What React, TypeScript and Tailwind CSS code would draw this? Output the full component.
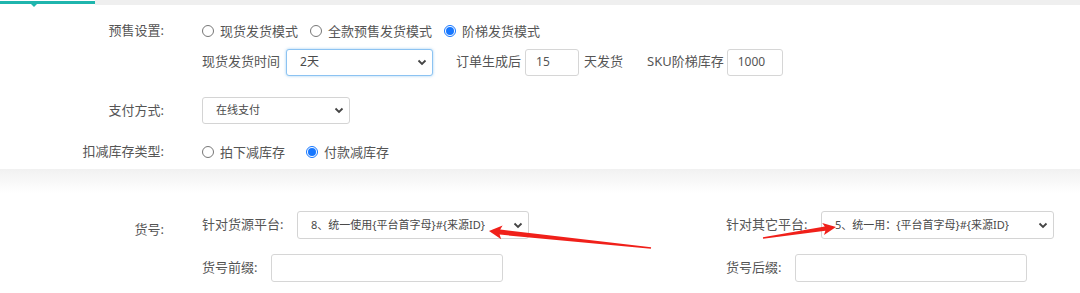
import React from "react";

const font = { fontFamily: '"Noto Sans", "Noto Sans CJK SC", sans-serif' };

function Radio({ checked, label }: { checked?: boolean; label: string }) {
  return (
    <label className="flex items-center gap-[6px] text-[13px] leading-5 text-[#555]">
      {checked ? (
        <span className="w-[12px] h-[12px] rounded-full border border-[#1677ff] flex items-center justify-center">
          <span className="w-[8px] h-[8px] rounded-full bg-[#1677ff]" />
        </span>
      ) : (
        <span className="w-[12px] h-[12px] rounded-full border border-[#777]" />
      )}
      <span>{label}</span>
    </label>
  );
}

function Chevron() {
  return (
    <svg width="10" height="7" viewBox="0 0 10 7" className="shrink-0">
      <polyline points="1.5,1.5 5,5 8.5,1.5" fill="none" stroke="#444" strokeWidth="1.8" />
    </svg>
  );
}

function Select({
  value,
  w,
  h = "h-[27px]",
  size = "text-[11px]",
  focus,
}: {
  value: string;
  w: string;
  h?: string;
  size?: string;
  focus?: boolean;
}) {
  return (
    <div
      className={`${w} ${h} ${size} flex items-center justify-between pl-[13px] pr-[5px] rounded-[3px] bg-white text-[#4a4a4a] border ${
        focus ? "border-[#8cc3f2] shadow-[0_0_3px_rgba(102,175,233,0.6)]" : "border-[#d4d4d4]"
      }`}
    >
      <span className="truncate">{value}</span>
      <Chevron />
    </div>
  );
}

function Input({ value, w, h = "h-[27px]" }: { value?: string; w: string; h?: string }) {
  return (
    <div className={`${w} ${h} flex items-center px-[10px] rounded-[3px] border border-[#d6d6d6] bg-white text-[12px] text-[#555]`}>
      {value}
    </div>
  );
}

export default function App() {
  return (
    <div className="relative w-[1080px] h-[293px] overflow-hidden bg-white" style={font}>
      {/* tab bar */}
      <div className="flex h-[5px]">
        <div className="relative w-[95px] h-[3px] mt-[1px] bg-[#1fb5ad]">
          <span className="absolute left-[30px] top-[2px] w-0 h-0 border-l-[4px] border-r-[4px] border-t-[4px] border-l-transparent border-r-transparent border-t-[#1fb5ad]" />
        </div>
        <div className="flex-1 bg-[#efefef]" />
      </div>

      {/* top section */}
      <div className="pt-[16px] pb-[7px] text-[13px] text-[#555]">
        <div className="flex items-center h-5">
          <div className="w-[164px] text-right">预售设置:</div>
          <div className="ml-[38px] flex items-center gap-[12px]">
            <Radio label="现货发货模式" />
            <Radio label="全款预售发货模式" />
            <Radio checked label="阶梯发货模式" />
          </div>
        </div>

        <div className="flex items-center mt-[7px] h-[28px]">
          <div className="ml-[202px] mr-[6px]">现货发货时间</div>
          <Select value="2天" w="w-[147px]" size="text-[12px]" focus />
          <div className="ml-[23px] mr-[4px]">订单生成后</div>
          <Input value="15" w="w-[54px]" />
          <div className="ml-[5px]">天发货</div>
          <div className="ml-[24px] mr-[3px]">SKU阶梯库存</div>
          <Input value="1000" w="w-[56px]" />
        </div>

        <div className="flex items-center mt-[21px] h-[27px]">
          <div className="w-[164px] text-right">支付方式:</div>
          <div className="ml-[38px]">
            <Select value="在线支付" w="w-[148px]" />
          </div>
        </div>

        <div className="flex items-center mt-[18px] h-5">
          <div className="w-[164px] text-right">扣减库存类型:</div>
          <div className="ml-[38px] flex items-center gap-[21px]">
            <Radio label="拍下减库存" />
            <Radio checked label="付款减库存" />
          </div>
        </div>
      </div>

      {/* bottom section */}
      <div className="bg-gradient-to-b from-[#f1f1f1] to-white to-[24px] pt-[42px] text-[13px] text-[#555]">
        <div className="flex">
          <div className="w-[164px] text-right leading-[28px] pt-[4px]">货号:</div>
          <div className="ml-[38px] w-[524px] flex flex-col gap-[15px]">
            <div className="flex items-center h-[28px]">
              <div className="w-[95px]">针对货源平台:</div>
              <Select value="8、统一使用{平台首字母}#{来源ID}" w="w-[232px]" h="h-[28px]" />
            </div>
            <div className="flex items-center h-[28px]">
              <div className="w-[69px]">货号前缀:</div>
              <Input w="w-[232px]" h="h-[28px]" />
            </div>
          </div>
          <div className="flex flex-col gap-[15px]">
            <div className="flex items-center h-[28px]">
              <div className="w-[95px]">针对其它平台:</div>
              <Select value="5、统一用：{平台首字母}#{来源ID}" w="w-[233px]" h="h-[28px]" />
            </div>
            <div className="flex items-center h-[28px]">
              <div className="w-[69px]">货号后缀:</div>
              <Input w="w-[232px]" h="h-[28px]" />
            </div>
          </div>
        </div>
      </div>

      {/* annotation arrows */}
      <svg className="absolute inset-0 pointer-events-none" width="1080" height="293" viewBox="0 0 1080 293">
        <polygon
          points="489,231 502.6,225.4 500.2,229.6 651.1,247.2 650.9,248.8 499.6,234.6 501.2,239.3"
          fill="#f0201a"
        />
        <polygon
          points="836,227 822.2,223 824.8,226.4 762.9,237.2 763.1,238.8 825.4,230.8 824,234.9"
          fill="#f0201a"
        />
      </svg>
    </div>
  );
}
